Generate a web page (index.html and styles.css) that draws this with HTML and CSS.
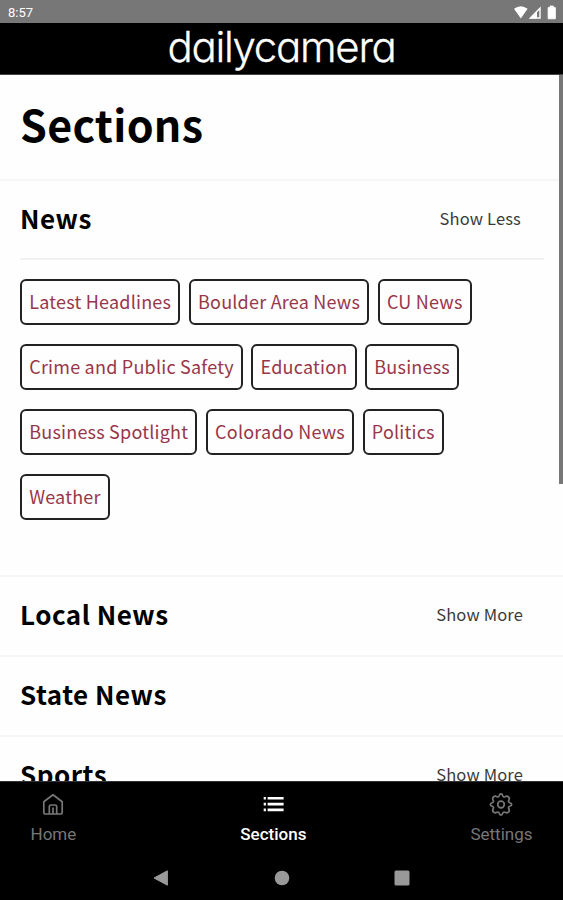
FILE: index.html
```html
<!DOCTYPE html>
<html lang="en">
<head>
    <meta charset="UTF-8">
    <meta name="viewport" content="width=device-width, initial-scale=1.0">
    <title>Daily Camera - Sections</title>
    <link rel="stylesheet" href="styles.css">
</head>
<body>
    <div class="status">
        <span>8:57</span>
        <svg class="status-icons" width="44" height="16" viewBox="0 0 44 16">
            <path d="M1 3.8Q7.8-1.2 14.6 3.8L7.8 13.4z" fill="#fff"/>
            <path d="M17.4 13L27 3.2V13z" fill="none" stroke="#fff" stroke-width="1.4"/>
            <path d="M17 13.6L24 6.6V13.6z" fill="#fff"/>
            <path d="M35.1 2.6h1.9V1h3.4v1.6h2v11.2h-7.3z" fill="#fff" stroke="#fff" stroke-width=".8" stroke-linejoin="round"/>
        </svg>
    </div>
    <header class="header">
        <span class="logo">dailycamera</span>
    </header>

    <main class="content">
        <h1>Sections</h1>

        <section class="group">
            <div class="group-head">
                <h2>News</h2>
                <a class="toggle less">Show Less</a>
            </div>
            <div class="chips">
                <a class="chip">Latest Headlines</a>
                <a class="chip">Boulder Area News</a>
                <a class="chip">CU News</a>
                <a class="chip">Crime and Public Safety</a>
                <a class="chip">Education</a>
                <a class="chip">Business</a>
                <a class="chip">Business Spotlight</a>
                <a class="chip">Colorado News</a>
                <a class="chip">Politics</a>
                <a class="chip">Weather</a>
            </div>
        </section>

        <section class="group">
            <div class="group-head">
                <h2>Local News</h2>
                <a class="toggle">Show More</a>
            </div>
        </section>
        <section class="group">
            <div class="group-head">
                <h2>State News</h2>
            </div>
        </section>
        <section class="group">
            <div class="group-head">
                <h2>Sports</h2>
                <a class="toggle">Show More</a>
            </div>
        </section>
        <div class="scrollbar"></div>
    </main>

    <nav class="tabs">
        <a class="tab home">
            <svg width="24" height="24" viewBox="0 0 24 24" fill="none" stroke="#777" stroke-width="1.7" stroke-linejoin="round">
                <path d="M2.8 8.7L12 1.8l9.2 6.9v10.6q0 1.7-1.7 1.7h-15q-1.7 0-1.7-1.7z"/>
                <path d="M8.3 21v-7.3q0-1.7 1.7-1.7h4q1.7 0 1.7 1.7v7.3M12 14.5v6.5"/>
            </svg>
            <span>Home</span>
        </a>
        <a class="tab sections">
            <svg width="24" height="24" viewBox="0 0 24 24" fill="#fff">
                <path d="M2.7 4h2.2v2.6H2.7zM2.7 9.8h2.2v2.6H2.7zM2.7 15.6h2.2v2.6H2.7zM6.6 4h16v2.6h-16zM6.6 9.8h16v2.6h-16zM6.6 15.6h16v2.6h-16z"/>
            </svg>
            <span>Sections</span>
        </a>
        <a class="tab settings">
            <svg width="24" height="24" viewBox="0 0.5 24 24" fill="none" stroke="#777" stroke-width="1.7" stroke-linejoin="round">
                <path d="M12 1.3Q13.3 1.3 13.7 3.1Q14.2 5 16 4.3Q18.3 3 19.5 4.5Q21 5.7 19.7 8Q19 9.8 20.9 10.3Q22.7 10.7 22.7 12Q22.7 13.3 20.9 13.7Q19 14.2 19.7 16Q21 18.3 19.5 19.5Q18.3 21 16 19.7Q14.2 19 13.7 20.9Q13.3 22.7 12 22.7Q10.7 22.7 10.3 20.9Q9.8 19 8 19.7Q5.7 21 4.5 19.5Q3 18.3 4.3 16Q5 14.2 3.1 13.7Q1.3 13.3 1.3 12Q1.3 10.7 3.1 10.3Q5 9.8 4.3 8Q3 5.7 4.5 4.5Q5.7 3 8 4.3Q9.8 5 10.3 3.1Q10.7 1.3 12 1.3z"/>
                <circle cx="12" cy="12" r="3.3"/>
            </svg>
            <span>Settings</span>
        </a>
    </nav>
    <div class="system">
        <svg width="16" height="16" viewBox="0 0 16 16"><path d="M14.4.8v14.4L1 8z" fill="#999" stroke="#999" stroke-linejoin="round"/></svg>
        <svg width="16" height="16" viewBox="0 0 16 16"><circle cx="8" cy="8" r="7.3" fill="#999"/></svg>
        <svg width="16" height="16" viewBox="0 0 16 16"><rect x=".5" y=".5" width="15" height="15" rx="1.5" fill="#999"/></svg>
    </div>
</body>
</html>
```
FILE: styles.css
```css
* {
    box-sizing: border-box;
}

body {
    margin: 0;
    height: 900px;
    display: flex;
    flex-direction: column;
    overflow: hidden;
    background-color: #000;
    font-family: "Noto Sans CJK SC", "Open Sans", sans-serif;
}

.status {
    height: 23px;
    display: flex;
    justify-content: space-between;
    align-items: center;
    padding: 2px 6px 0 8px;
    background-color: #777;
    color: #fff;
    font: 13px Roboto, sans-serif;
}

.header {
    height: 52px;
    display: flex;
    justify-content: center;
    border-bottom: 1px solid #444;
}

.logo {
    color: #fff;
    font: 300 42px/47px Inter, sans-serif;
    font-feature-settings: "cv11";
    letter-spacing: -1.3px;
    -webkit-text-stroke: 0.3px #fff;
}

.content {
    position: relative;
    height: 706px;
    overflow: hidden;
    background-color: #fefefe;
}

h1 {
    margin: 0;
    height: 104px;
    padding-left: 20px;
    font-size: 43px;
    line-height: 97px;
    letter-spacing: 0.3px;
}

.group {
    border-top: 2px solid #f6f6f6;
}

.group-head {
    height: 78px;
    margin: 0 19px 0 20px;
    padding-bottom: 4px;
    display: flex;
    justify-content: space-between;
    align-items: center;
}

h2 {
    margin: 0;
    font-size: 26px;
    line-height: 40px;
    letter-spacing: 0.5px;
}

.toggle {
    margin-right: 21px;
    padding-top: 1px;
    color: #3a3a3a;
    font-size: 16.5px;
    line-height: 25px;
    letter-spacing: 0.15px;
}

.toggle.less {
    margin-right: 23px;
}

.chips {
    display: flex;
    flex-wrap: wrap;
    gap: 19px 8.4px;
    height: 317px;
    margin: -1px 19px 0 20px;
    padding: 19px 20px 0 0;
    border-top: 2px solid #f1f1f1;
    align-content: flex-start;
}

.chip {
    height: 46px;
    padding: 0 7.2px;
    border: 2px solid #222;
    border-radius: 6px;
    color: #98364a;
    font-size: 18px;
    line-height: 40px;
    letter-spacing: 0.22px;
    white-space: nowrap;
}

.scrollbar {
    position: absolute;
    top: 0;
    right: 0;
    width: 4px;
    height: 409px;
    background-color: #777;
}

.tabs {
    height: 75px;
    display: flex;
    justify-content: space-between;
    padding: 11px 30.5px 0;
    border-top: 1px solid #333;
    color: #777;
    font: 17px/20px Roboto, sans-serif;
}

.tab {
    display: flex;
    flex-direction: column;
    align-items: center;
    gap: 7px;
}

.sections {
    color: #fff;
    font-weight: 500;
}

.system {
    height: 44px;
    display: flex;
    justify-content: center;
    align-items: center;
    gap: 104.5px;
}
```
